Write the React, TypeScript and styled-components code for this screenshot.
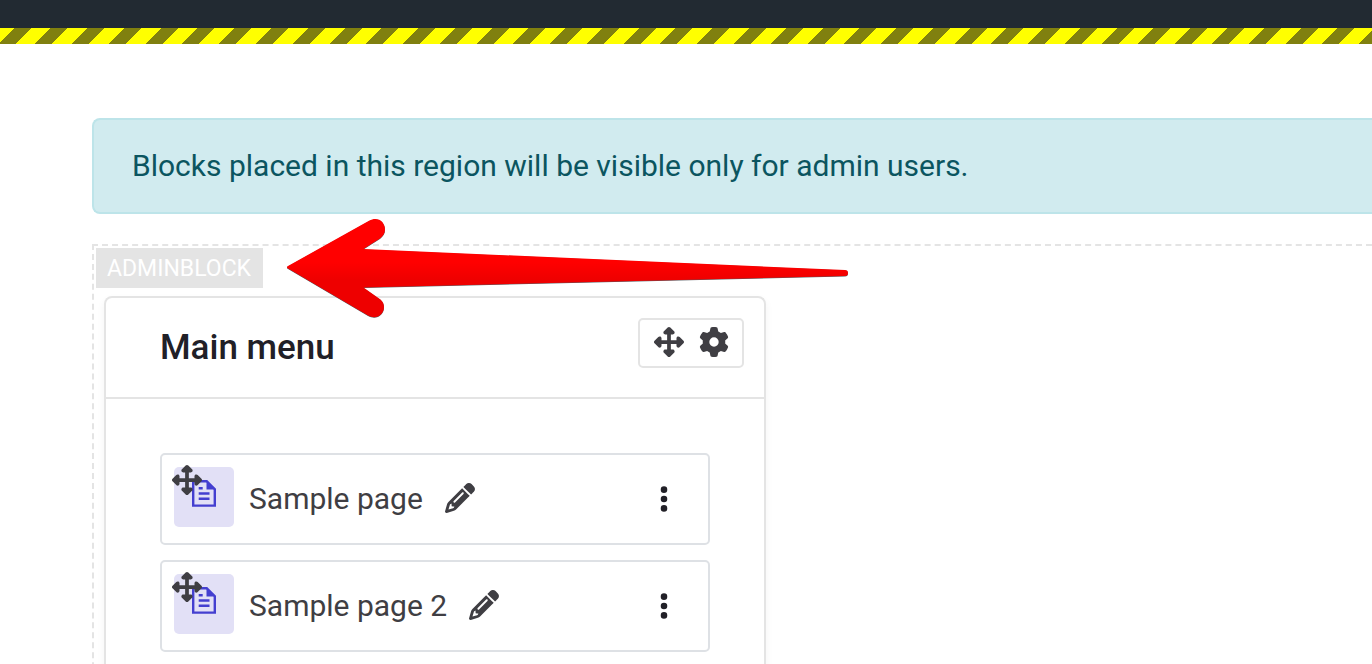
import React from "react";
import styled, { createGlobalStyle } from "styled-components";
import {
  FaEllipsisVertical,
  FaGear,
  FaPencil,
  FaUpDownLeftRight,
} from "react-icons/fa6";

const GlobalStyle = createGlobalStyle`
  *, *::before, *::after { box-sizing: border-box; }
  body {
    margin: 0;
    background: #fff;
    color: #3f3e43;
    font: 400 30px/44px Roboto, "Liberation Sans", sans-serif;
  }
  button {
    display: flex;
    align-items: center;
    justify-content: center;
    margin: 0;
    padding: 0;
    border: 0;
    background: none;
    color: inherit;
    font-size: 30px;
    line-height: 1;
    cursor: pointer;
  }
`;

const Page = styled.div`
  display: flex;
  flex-direction: column;
  height: 100vh;
  overflow: hidden;
`;

const TopBar = styled.header`
  flex: none;
  height: 28px;
  background: #222a32;
`;

const HazardStripe = styled.div`
  flex: none;
  height: 16px;
  background: repeating-linear-gradient(
    135deg,
    #ffff00 0 10px,
    #80800f 10px 22px,
    #ffff00 22px 26px
  );
`;

const Content = styled.main`
  flex: 1;
  display: flex;
  flex-direction: column;
  gap: 30px;
  padding: 74px 0 0 92px;
`;

const Notice = styled.p`
  flex: none;
  margin: 0;
  padding: 24px 38px;
  border: 2px solid #bde4e9;
  border-right: 0;
  border-radius: 8px 0 0 8px;
  background: #d1ebef;
  color: #0b5560;
`;

const Region = styled.section`
  position: relative;
  flex: 1;
  display: flex;
  flex-direction: column;
  align-items: flex-start;
  gap: 8px;
  padding: 2px;
  border: 2px dashed #e4e4e4;
  border-width: 2px 0 0 2px;
`;

const RegionLabel = styled.span`
  padding: 2px 12px 0 11px;
  background: #e4e4e4;
  color: #fff;
  font-size: 23px;
  line-height: 38px;
  text-transform: uppercase;
`;

const Card = styled.section`
  flex: 1;
  width: 100%;
  max-width: 662px;
  margin-left: 8px;
  border: 2px solid #e4e4e4;
  border-bottom: 0;
  border-radius: 8px 8px 0 0;
  background: #fff;
  box-shadow: 0 4px 8px rgba(0, 0, 0, 0.05);
`;

const CardHeader = styled.header`
  display: flex;
  justify-content: space-between;
  align-items: flex-start;
  padding: 20px 20px 27px 54px;
  border-bottom: 2px solid #e4e4e4;
`;

const CardTitle = styled.h2`
  margin: 0;
  padding-top: 8px;
  color: #212027;
  font-size: 35px;
  font-weight: 500;
  line-height: 44px;
`;

const Controls = styled.div`
  display: flex;
  gap: 15px;
  height: 50px;
  padding: 0 13px 2px 14px;
  border: 2px solid #e4e4e4;
  border-radius: 5px;
`;

const ItemList = styled.ul`
  display: flex;
  flex-direction: column;
  gap: 15px;
  margin: 0;
  padding: 54px;
  list-style: none;
`;

const Item = styled.li`
  display: flex;
  align-items: center;
  height: 92px;
  padding: 0 29px 0 12px;
  border: 2px solid #dee1e5;
  border-radius: 5px;
`;

const IconTile = styled.div`
  position: relative;
  align-self: flex-start;
  flex: none;
  width: 60px;
  height: 60px;
  margin: 12px 15px 0 0;
  padding: 12px 17px;
  border-radius: 5px;
  background: #e2e0f6;
`;

const PageGlyph = styled.svg`
  display: block;
`;

const MoveHandle = styled.button`
  position: absolute;
  top: -2px;
  left: -2px;
`;

const ItemLink = styled.a`
  color: inherit;
  text-decoration: none;
`;

const EditButton = styled.button`
  margin-left: 22px;
  padding-bottom: 2px;
`;

const MenuButton = styled.button`
  width: 30px;
  margin-left: auto;
  color: #212027;
`;

const ArrowOverlay = styled.svg`
  position: absolute;
  top: -32px;
  left: 188px;
  pointer-events: none;
`;

const PageIcon = () => (
  <PageGlyph width="26" height="30" viewBox="0 0 26 30" aria-hidden="true">
    <path
      d="M2.2 2.200h13.500l8.100 8v16.400h-21.600z"
      fill="none"
      stroke="#443fd0"
      strokeWidth="2.400"
    />
    <path d="M15.500 1.500l9.300 9h-9.300z" fill="#443fd0" />
    <path d="M7.700 9.300h4M7.700 14.500h10.800M7.700 19.700h10.800" stroke="#443fd0" strokeWidth="2.400" />
  </PageGlyph>
);

const ARROW_PATH =
  "M288 266L369 220.8C378 216 385 222 385 229.5C385 233.5 383 236 380 238.5L363.5 249L845 270Q848 270.2 848 273Q848 276 845 276L363.5 287.5L380.5 299.5C383 302 384 304 384 307C384 315 376 320 368 315.5L288 268.5Q286 267 288 266Z";

const RedArrow = () => (
  <ArrowOverlay width="570" height="110" viewBox="282 214 570 110" aria-hidden="true">
    <defs>
      <linearGradient id="arrowFill" x1="0" y1="0" x2="0" y2="1">
        <stop offset="0.44" stopColor="#ff0000" />
        <stop offset="0.62" stopColor="#ee0000" />
      </linearGradient>
    </defs>
    <path d={ARROW_PATH} transform="translate(0 0.5)" fill="#555a60" />
    <path d={ARROW_PATH} fill="url(#arrowFill)" />
  </ArrowOverlay>
);

const items = ["Sample page", "Sample page 2"];

export default function App() {
  return (
    <>
      <GlobalStyle />
      <Page>
        <TopBar />
        <HazardStripe />
        <Content>
          <Notice>Blocks placed in this region will be visible only for admin users.</Notice>
          <Region aria-label="Adminblock">
            <RegionLabel>Adminblock</RegionLabel>
            <Card>
              <CardHeader>
                <CardTitle>Main menu</CardTitle>
                <Controls>
                  <button type="button" aria-label="Move block">
                    <FaUpDownLeftRight />
                  </button>
                  <button type="button" aria-label="Block settings">
                    <FaGear />
                  </button>
                </Controls>
              </CardHeader>
              <ItemList>
                {items.map((name) => (
                  <Item key={name}>
                    <IconTile>
                      <PageIcon />
                      <MoveHandle type="button" aria-label={`Move ${name}`}>
                        <FaUpDownLeftRight />
                      </MoveHandle>
                    </IconTile>
                    <ItemLink href="#">{name}</ItemLink>
                    <EditButton type="button" aria-label={`Edit ${name}`}>
                      <FaPencil />
                    </EditButton>
                    <MenuButton type="button" aria-label={`Actions for ${name}`}>
                      <FaEllipsisVertical />
                    </MenuButton>
                  </Item>
                ))}
              </ItemList>
            </Card>
            <RedArrow />
          </Region>
        </Content>
      </Page>
    </>
  );
}
